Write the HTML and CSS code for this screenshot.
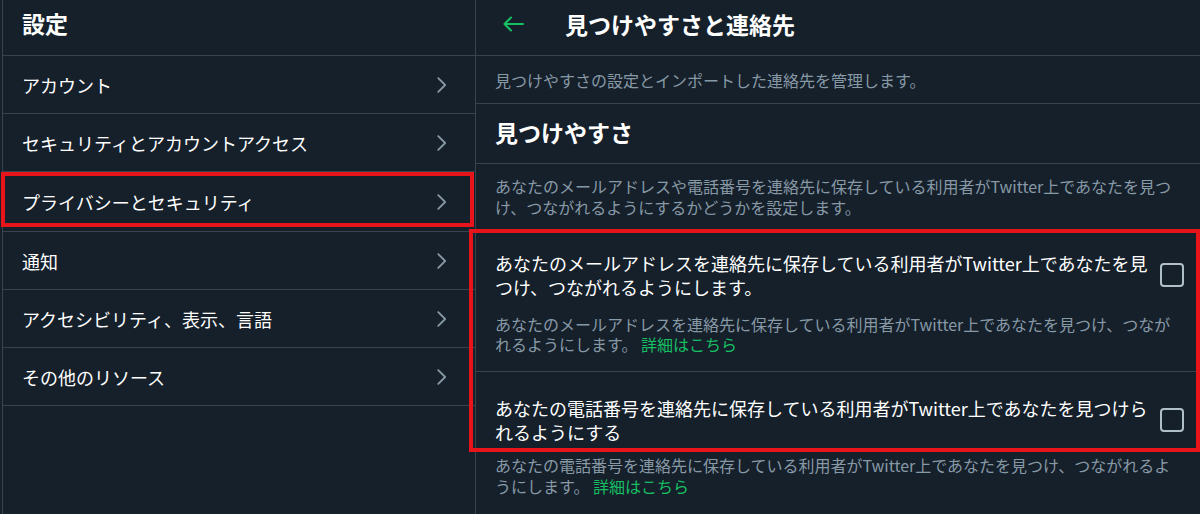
FILE: index.html
```html
<!DOCTYPE html>
<html lang="ja">
<head>
    <meta charset="UTF-8">
    <meta name="viewport" content="width=device-width, initial-scale=1.0">
    <title>見つけやすさと連絡先</title>
    <link rel="stylesheet" href="styles.css">
</head>
<body>
    <div class="page">
        <div class="settings-menu">
            <div class="menu-header">設定</div>
            <div class="menu-item">
                <span>アカウント</span>
                <svg class="chevron" viewBox="0 0 24 24"><path d="M17.207 11.293l-7.5-7.5c-.39-.39-1.023-.39-1.414 0s-.39 1.023 0 1.414L15.086 12l-6.793 6.793c-.39.39-.39 1.023 0 1.414.195.195.45.293.707.293s.512-.098.707-.293l7.5-7.5c.39-.39.39-1.023 0-1.414z"/></svg>
            </div>
            <div class="menu-item">
                <span>セキュリティとアカウントアクセス</span>
                <svg class="chevron" viewBox="0 0 24 24"><path d="M17.207 11.293l-7.5-7.5c-.39-.39-1.023-.39-1.414 0s-.39 1.023 0 1.414L15.086 12l-6.793 6.793c-.39.39-.39 1.023 0 1.414.195.195.45.293.707.293s.512-.098.707-.293l7.5-7.5c.39-.39.39-1.023 0-1.414z"/></svg>
            </div>
            <div class="menu-item">
                <span>プライバシーとセキュリティ</span>
                <svg class="chevron" viewBox="0 0 24 24"><path d="M17.207 11.293l-7.5-7.5c-.39-.39-1.023-.39-1.414 0s-.39 1.023 0 1.414L15.086 12l-6.793 6.793c-.39.39-.39 1.023 0 1.414.195.195.45.293.707.293s.512-.098.707-.293l7.5-7.5c.39-.39.39-1.023 0-1.414z"/></svg>
            </div>
            <div class="menu-item">
                <span>通知</span>
                <svg class="chevron" viewBox="0 0 24 24"><path d="M17.207 11.293l-7.5-7.5c-.39-.39-1.023-.39-1.414 0s-.39 1.023 0 1.414L15.086 12l-6.793 6.793c-.39.39-.39 1.023 0 1.414.195.195.45.293.707.293s.512-.098.707-.293l7.5-7.5c.39-.39.39-1.023 0-1.414z"/></svg>
            </div>
            <div class="menu-item">
                <span>アクセシビリティ、表示、言語</span>
                <svg class="chevron" viewBox="0 0 24 24"><path d="M17.207 11.293l-7.5-7.5c-.39-.39-1.023-.39-1.414 0s-.39 1.023 0 1.414L15.086 12l-6.793 6.793c-.39.39-.39 1.023 0 1.414.195.195.45.293.707.293s.512-.098.707-.293l7.5-7.5c.39-.39.39-1.023 0-1.414z"/></svg>
            </div>
            <div class="menu-item">
                <span>その他のリソース</span>
                <svg class="chevron" viewBox="0 0 24 24"><path d="M17.207 11.293l-7.5-7.5c-.39-.39-1.023-.39-1.414 0s-.39 1.023 0 1.414L15.086 12l-6.793 6.793c-.39.39-.39 1.023 0 1.414.195.195.45.293.707.293s.512-.098.707-.293l7.5-7.5c.39-.39.39-1.023 0-1.414z"/></svg>
            </div>
        </div>

        <div class="detail">
            <div class="detail-header">
                <svg class="back-arrow" viewBox="0 0 22 16"><path d="M21 8H2.5M9 1.5L2.5 8 9 14.5"/></svg>
                <h2>見つけやすさと連絡先</h2>
            </div>
            <div class="detail-desc">見つけやすさの設定とインポートした連絡先を管理します。</div>
            <div class="section-title">見つけやすさ</div>
            <div class="section-desc">あなたのメールアドレスや電話番号を連絡先に保存している利用者がTwitter上であなたを見つけ、つながれるようにするかどうかを設定します。</div>

            <div class="option option-first">
                <div class="option-row">
                    <div class="option-label">あなたのメールアドレスを連絡先に保存している利用者がTwitter上であなたを見つけ、つながれるようにします。</div>
                    <div class="checkbox"></div>
                </div>
                <p class="option-note"><span>あなたのメールアドレスを連絡先に保存している利用者がTwitter上であなたを見つけ、つながれるようにします。</span> <a class="link">詳細はこちら</a></p>
            </div>

            <div class="option option-last">
                <div class="option-row">
                    <div class="option-label">あなたの電話番号を連絡先に保存している利用者がTwitter上であなたを見つけられるようにする</div>
                    <div class="checkbox"></div>
                </div>
                <p class="option-note"><span>あなたの電話番号を連絡先に保存している利用者がTwitter上であなたを見つけ、つながれるようにします。</span> <a class="link">詳細はこちら</a></p>
            </div>
        </div>

        <div class="mark mark-menu"></div>
        <div class="mark mark-options"></div>
    </div>
</body>
</html>
```

FILE: styles.css
```css
body {
    margin: 0;
    background-color: #15202b;
    color: #ffffff;
    font-family: "Noto Sans CJK JP", "Noto Sans", sans-serif;
}

.page {
    position: relative;
    display: flex;
    width: 1200px;
    height: 514px;
    overflow: hidden;
}

/* left settings list */

.settings-menu {
    width: 472px;
    margin-left: 2px;
    border-left: 1px solid #38444d;
    border-right: 1px solid #38444d;
}

.menu-header {
    height: 56px;
    box-sizing: border-box;
    border-bottom: 1px solid #38444d;
    padding: 0 19px 10px;
    display: flex;
    align-items: center;
    font-size: 23px;
    font-weight: bold;
}

.menu-item {
    height: 58px;
    box-sizing: border-box;
    border-bottom: 1px solid #38444d;
    padding: 0 23px 0 19px;
    display: flex;
    align-items: center;
    justify-content: space-between;
    font-size: 18px;
    color: #ffffff;
}

.menu-item:nth-child(4) {
    height: 60px;
}

.chevron {
    width: 22px;
    height: 22px;
    fill: #8899a6;
}

/* right detail panel */

.detail {
    flex: 1;
}

.detail-header {
    height: 56px;
    box-sizing: border-box;
    border-bottom: 1px solid #38444d;
    display: flex;
    align-items: center;
    padding: 0 0 8px 26px;
}

.back-arrow {
    width: 22px;
    height: 16px;
    fill: none;
    stroke: #17bf63;
    stroke-width: 2;
    stroke-linecap: round;
    stroke-linejoin: round;
    margin-right: 41px;
}

.detail-header h2 {
    margin: 0;
    font-size: 23px;
    font-weight: bold;
}

.detail-desc {
    height: 48px;
    box-sizing: border-box;
    border-bottom: 1px solid #38444d;
    display: flex;
    align-items: center;
    padding: 0 19px;
    font-size: 16px;
    color: #8899a6;
}

.section-title {
    height: 60px;
    box-sizing: border-box;
    border-bottom: 1px solid #38444d;
    display: flex;
    align-items: center;
    padding: 0 19px 4px;
    font-size: 23px;
    font-weight: bold;
}

.section-desc {
    padding: 12px 19px 12px;
    font-size: 16px;
    line-height: 21px;
    color: #8899a6;
    border-bottom: 1px solid #38444d;
}

.option {
    padding: 20px 16px 0 19px;
}

.option-first {
    padding-bottom: 17px;
    border-bottom: 1px solid #38444d;
}

.option-last {
    padding-top: 24px;
}

.option-row {
    display: flex;
    align-items: center;
    gap: 10px;
}

.option-label {
    flex: 1;
    font-size: 18px;
    line-height: 24px;
}

.checkbox {
    width: 20px;
    height: 20px;
    border: 2px solid #b1bfc9;
    border-radius: 4px;
    flex-shrink: 0;
}

.option-note {
    margin: 15px 0 0;
    font-size: 16px;
    line-height: 20px;
    color: #8899a6;
}

.option-last .option-note {
    margin-top: 11px;
    line-height: 21px;
}

.link {
    color: #17bf63;
}

/* red annotation boxes drawn over the screenshot */

.mark {
    position: absolute;
    border: 4px solid #e8141c;
    box-sizing: border-box;
}

.mark-menu {
    left: 1px;
    top: 172px;
    width: 473px;
    height: 55px;
}

.mark-options {
    left: 469px;
    top: 229px;
    width: 731px;
    height: 223px;
}
```
